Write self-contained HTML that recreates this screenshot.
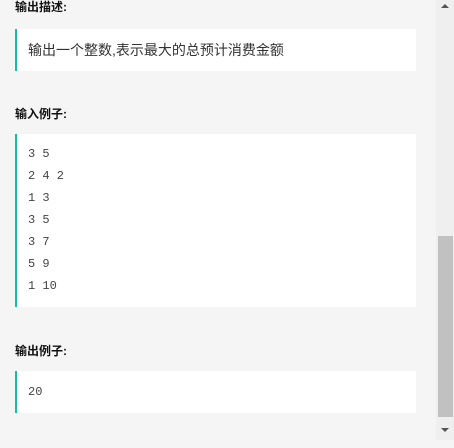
<!DOCTYPE html>
<html><head><meta charset="utf-8"><style>
body{margin:0;width:454px;height:448px;background:#f5f5f5;position:relative;overflow:hidden;font-family:"Liberation Sans","Noto Sans CJK SC",sans-serif}
.h{position:absolute;left:15px;font-size:12px;font-weight:bold;color:#111}
.box{position:absolute;left:15px;width:399px;background:#fff;border-left:2px solid #1abc9c}
.t{position:absolute;left:11px;font-size:14px;color:#333}
.code{position:absolute;left:11px;font-family:"Liberation Mono",monospace;font-size:12px;color:#444;line-height:22px}
.sb{position:absolute;left:436px;top:0;width:18px;height:440px;background:#efefef}
.th{position:absolute;left:438px;top:236px;width:15px;height:181px;background:#c1c1c1}
</style></head><body>
<div class="h" style="top:-2px">输出描述:</div>
<div class="box" style="top:29px;height:42px"><div class="t" style="top:11px">输出一个整数,表示最大的总预计消费金额</div></div>
<div class="h" style="top:105px">输入例子:</div>
<div class="box" style="top:134px;height:173px"><div class="code" style="top:9px">3 5<br>2 4 2<br>1 3<br>3 5<br>3 7<br>5 9<br>1 10</div></div>
<div class="h" style="top:342px">输出例子:</div>
<div class="box" style="top:371px;height:42px"><div class="code" style="top:10px">20</div></div>
<div class="sb"></div><div class="th"></div>
<div style="position:absolute;left:441px;top:4px;width:0;height:0;border-left:4px solid transparent;border-right:4px solid transparent;border-bottom:4px solid #555"></div>
<div style="position:absolute;left:441px;top:428px;width:0;height:0;border-left:4px solid transparent;border-right:4px solid transparent;border-top:4px solid #555"></div>
</body></html>
